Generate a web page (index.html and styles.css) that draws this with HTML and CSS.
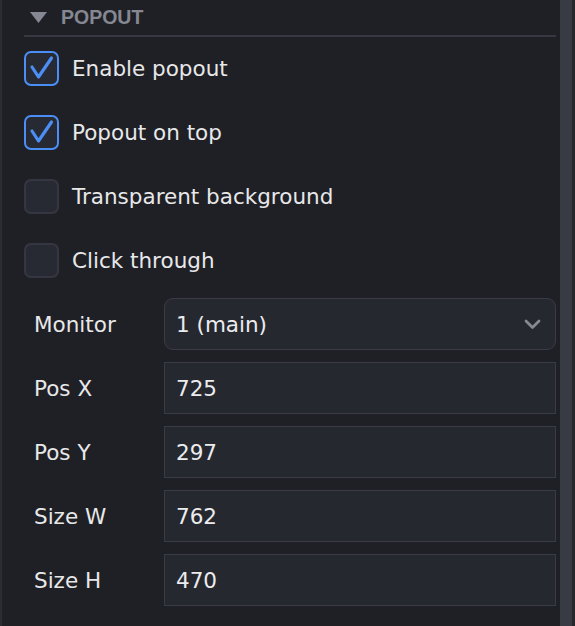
FILE: index.html
```html
<!DOCTYPE html>
<html lang="en">
<head>
  <meta charset="UTF-8" />
  <meta name="viewport" content="width=device-width, initial-scale=1.0"/>
  <title>Popout settings</title>
  <link rel="stylesheet" href="styles.css">
</head>
<body>

  <div class="edge"></div>

  <!-- Settings Panel -->
  <div class="panel">
    <div class="section-head">
      <svg class="caret" width="17" height="11" viewBox="0 0 17 11">
        <polygon points="0,0 17,0 8.5,11" fill="#858892"/>
      </svg>
      <span>POPOUT</span>
    </div>

    <div class="checks">
      <label class="check">
        <span class="box on">
          <svg width="31" height="31" viewBox="0 0 31 31">
            <polyline points="6,14 12.5,24 25.5,5" fill="none" stroke="#4b8ef5" stroke-width="3.2" stroke-linecap="round" stroke-linejoin="round"/>
          </svg>
        </span>
        Enable popout
      </label>
      <label class="check">
        <span class="box on">
          <svg width="31" height="31" viewBox="0 0 31 31">
            <polyline points="6,14 12.5,24 25.5,5" fill="none" stroke="#4b8ef5" stroke-width="3.2" stroke-linecap="round" stroke-linejoin="round"/>
          </svg>
        </span>
        Popout on top
      </label>
      <label class="check">
        <span class="box"></span>
        Transparent background
      </label>
      <label class="check">
        <span class="box"></span>
        Click through
      </label>
    </div>

    <div class="fields">
      <div class="field-label">Monitor</div>
      <div class="select">
        <span>1 (main)</span>
        <svg width="17" height="11" viewBox="0 0 17 11">
          <polyline points="2,2 8.5,8.5 15,2" fill="none" stroke="#868993" stroke-width="2.8" stroke-linecap="round" stroke-linejoin="round"/>
        </svg>
      </div>

      <div class="field-label">Pos X</div>
      <div class="input">725</div>

      <div class="field-label">Pos Y</div>
      <div class="input">297</div>

      <div class="field-label">Size W</div>
      <div class="input">762</div>

      <div class="field-label">Size H</div>
      <div class="input">470</div>
    </div>
  </div>

  <div class="scrollbar"></div>
  <div class="tail"></div>

</body>
</html>
```

FILE: styles.css
```css
body {
  margin: 0;
  height: 626px;
  overflow: hidden;
  display: flex;
  background: #1f2025;
  color: #e8e8ea;
  font-family: 'DejaVu Sans', sans-serif;
  font-size: 21.5px;
}

.edge {
  width: 2px;
  background: #2c2d34;
}

.scrollbar {
  width: 12px;
  background: #383a44;
}

.tail {
  width: 3px;
  background: #26272c;
}

/* Panel */
.panel {
  flex: 1;
  padding: 0 4px 0 22px;
}

.section-head {
  height: 35px;
  display: flex;
  align-items: center;
  gap: 14px;
  padding-left: 6px;
  border-bottom: 2px solid #373841;
  color: #858892;
  font-family: 'Liberation Sans', sans-serif;
  font-weight: bold;
  font-size: 19.5px;
}

/* Checkboxes */
.checks {
  display: flex;
  flex-direction: column;
  gap: 29px;
  padding-top: 14px;
}

.check {
  display: flex;
  align-items: center;
  gap: 13px;
  height: 35px;
}

.box {
  width: 31px;
  height: 31px;
  border: 2px solid #343741;
  border-radius: 7px;
  background: #272a33;
  display: flex;
}

.box.on {
  border-color: #4b8ef5;
}

/* Fields */
.fields {
  margin-top: 20px;
  display: grid;
  grid-template-columns: 140px 1fr;
  grid-auto-rows: 52px;
  row-gap: 12px;
}

.field-label {
  display: flex;
  align-items: center;
  padding-left: 10px;
}

.select,
.input {
  display: flex;
  align-items: center;
  background: #262830;
  border: 1px solid #3a3c45;
  padding: 0 11px;
  color: #ececee;
}

.select {
  justify-content: space-between;
  border-radius: 9px;
  padding-right: 14px;
}
```
